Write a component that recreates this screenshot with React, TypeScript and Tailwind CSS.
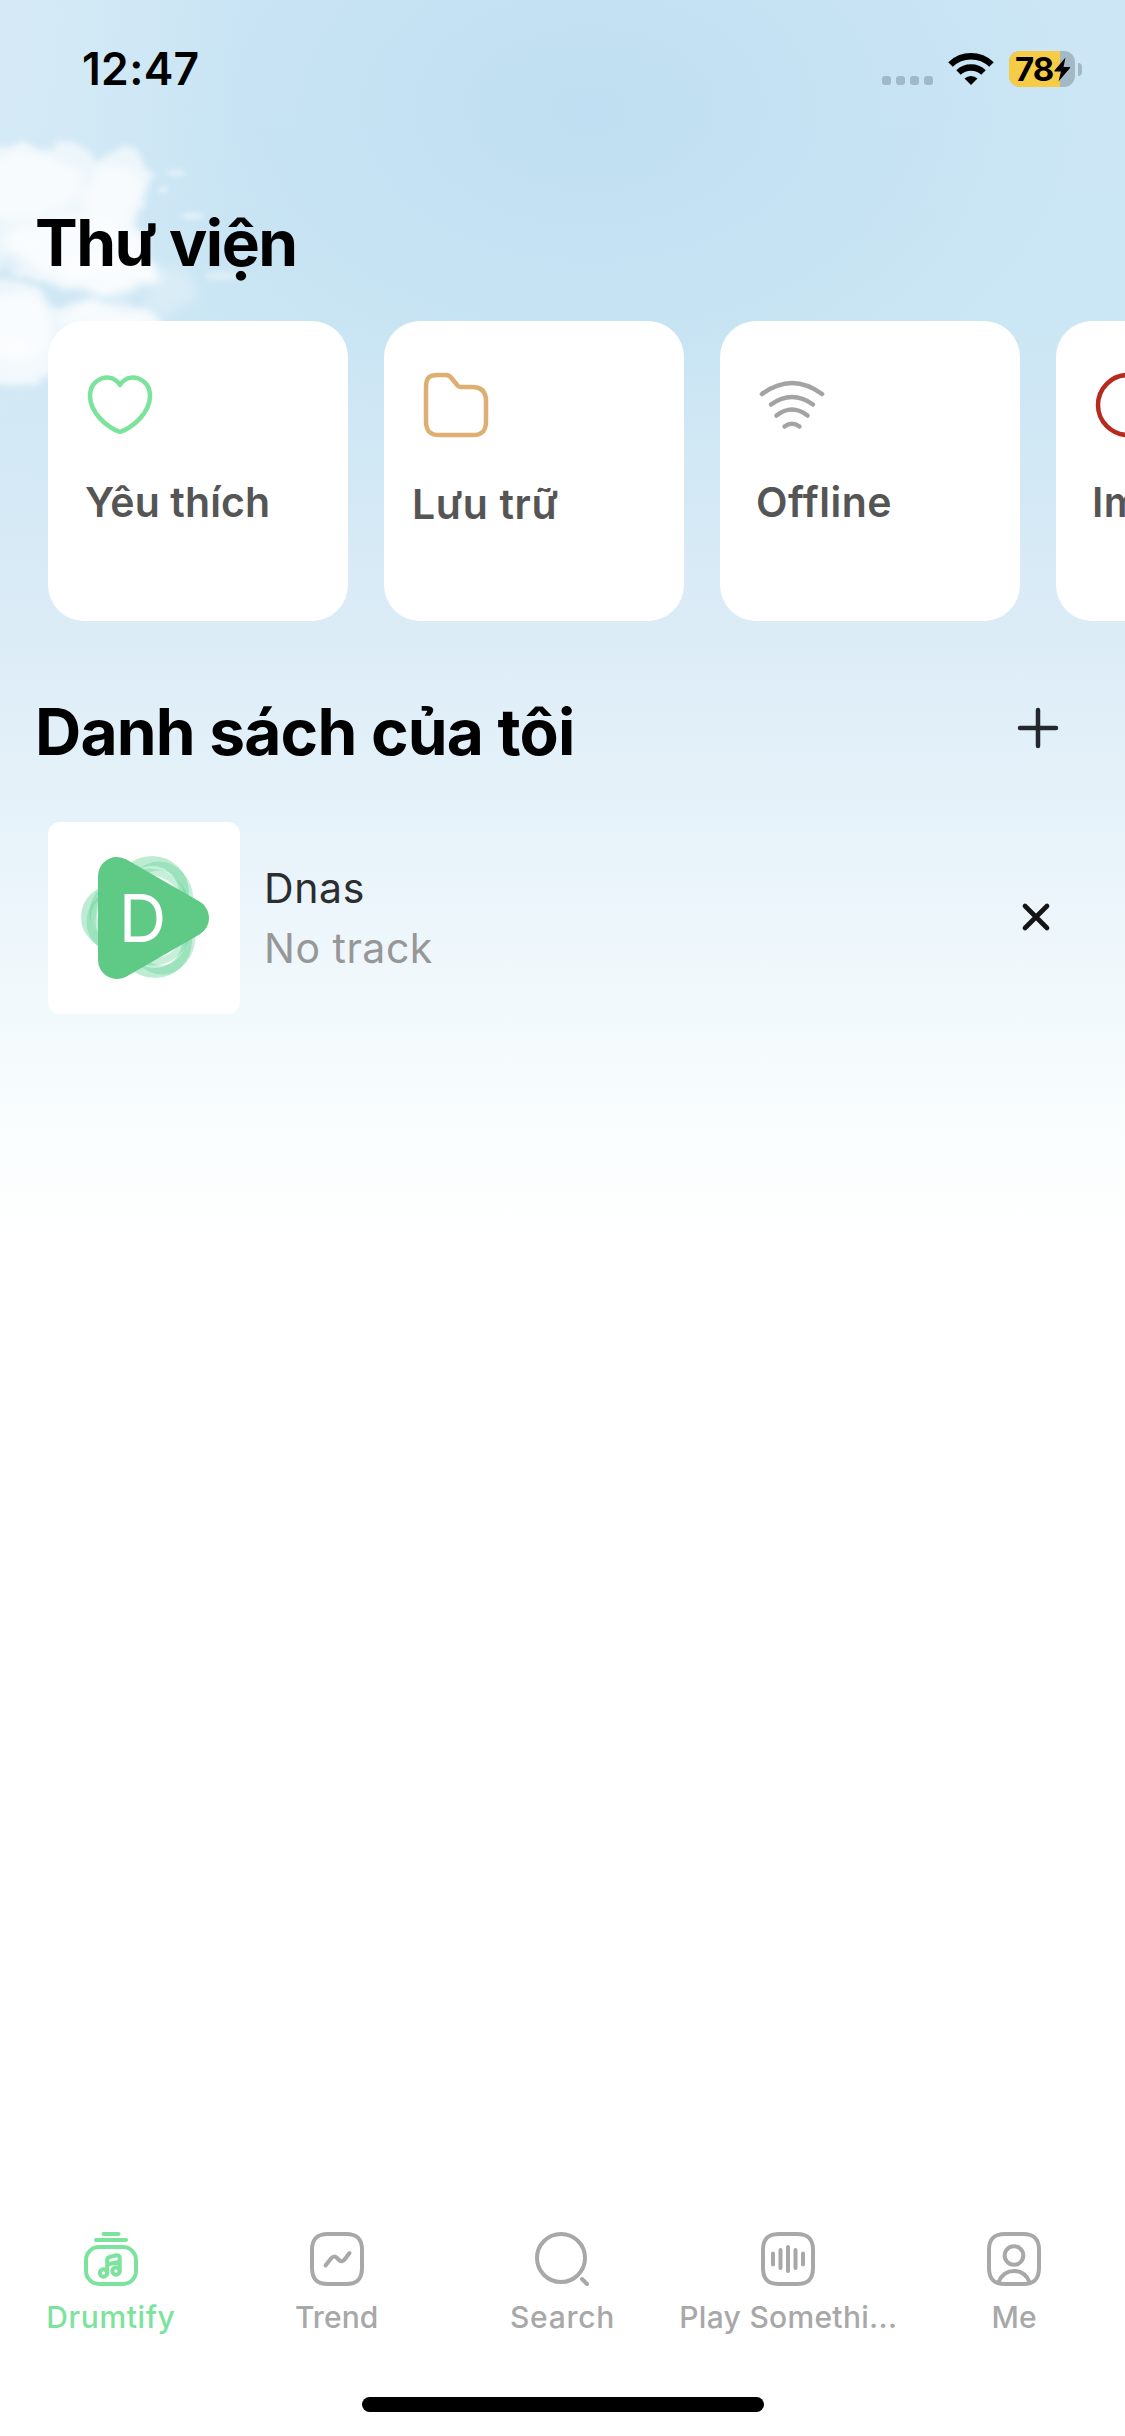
import type { ReactNode } from 'react';
import { clsx } from 'clsx';

type Shortcut = {
  id: string;
  label: string;
  color: string;
  labelClass: string;
  icon: ReactNode;
};

const shortcuts: Shortcut[] = [
  {
    id: 'favorite',
    label: 'Yêu thích',
    color: 'text-[#7be39b]',
    labelClass: 'ml-[-2px] mt-[38px] tracking-[0.1px]',
    icon: (
      <path d="M33 13C28.500 6 21 4 14.500 6.500C7 9.500 3 16 3 24C3 40 19 55 33 60C47 55 63 40 63 24C63 16 59 9.500 51.500 6.500C45 4 37.500 6 33 13Z" />
    ),
  },
  {
    id: 'archive',
    label: 'Lưu trữ',
    color: 'text-[#dfae73]',
    labelClass: 'ml-[-11px] mt-[40px] tracking-[0.6px]',
    icon: (
      <path d="M3 15C3 6 6 3 15 3H23Q26 3 28 5.500L35 14Q36 15 38 15H49C59 15 63 20 63 29V49C63 59 59 63 50 63H16C7 63 3 59 3 49Z" />
    ),
  },
  {
    id: 'offline',
    label: 'Offline',
    color: 'text-[#a3a3a3]',
    labelClass: 'ml-[-3px] mt-[38px] tracking-[0.5px]',
    icon: (
      <>
        <path d="M3 22Q33 0 63 22" />
        <path d="M12 32.500Q33 17.500 54 32.500" />
        <path d="M17.500 43.500Q33 31.500 48.500 43.500" />
        <path d="M25.500 54.500Q33 49 40.500 54.500" />
      </>
    ),
  },
  {
    id: 'import',
    label: 'Import',
    color: 'text-[#b92a1e]',
    labelClass: 'ml-[-3px] mt-[38px] tracking-[0.5px]',
    icon: <circle cx="33" cy="33" r="30" />,
  },
];

const tabs = [
  {
    id: 'drumtify',
    label: 'Drumtify',
    labelClass: 'tracking-[0.6px]',
    icon: (
      <>
        <path d="M19.500 2H34.500M12 8H42" />
        <rect x="2" y="15" width="50" height="37" rx="13" />
        <circle cx="19.500" cy="41" r="3.700" />
        <circle cx="32" cy="39" r="3.700" />
        <path d="M23.200 41V28Q23.200 25.500 25.500 25L32.500 23.300Q35.700 22.800 35.700 25.500V39M23.200 32.500L35.700 29.700" />
      </>
    ),
  },
  {
    id: 'trend',
    label: 'Trend',
    labelClass: 'tracking-[0.1px]',
    icon: (
      <>
        <path d="M18 2H36C47 2 52 7 52 18V36C52 47 47 52 36 52H18C7 52 2 47 2 36V18C2 7 7 2 18 2Z" />
        <path d="M15.500 33.500L21 26.500Q24 23 27 26L29 28Q32 31 35 27L39.500 21" />
      </>
    ),
  },
  {
    id: 'search',
    label: 'Search',
    labelClass: 'tracking-[0.7px]',
    icon: (
      <>
        <circle cx="26" cy="26" r="24" />
        <path d="M47 47L52 52" />
      </>
    ),
  },
  {
    id: 'play',
    label: 'Play Somethi...',
    labelClass: 'tracking-[0.3px]',
    icon: (
      <>
        <path d="M18 2H36C47 2 52 7 52 18V36C52 47 47 52 36 52H18C7 52 2 47 2 36V18C2 7 7 2 18 2Z" />
        <path d="M12 21.500V32.500M19.500 18V36M27 15V39M34.500 18V36M42 21.500V32.500" />
      </>
    ),
  },
  {
    id: 'me',
    label: 'Me',
    labelClass: 'tracking-[0px]',
    icon: (
      <>
        <path d="M18 2H36C47 2 52 7 52 18V36C52 47 47 52 36 52H18C7 52 2 47 2 36V18C2 7 7 2 18 2Z" />
        <circle cx="27" cy="23.500" r="9.300" />
        <path d="M11.500 50C15 42 20 39 27 39C34 39 39 42 42.500 50" />
      </>
    ),
  },
];

function Sky() {
  return (
    <div className="absolute inset-x-0 top-0 h-[1250px] bg-[linear-gradient(180deg,#cce6f5_0px,#cbe6f4_320px,#d2e8f5_470px,#dcecf7_640px,#e4f1f9_780px,#edf6fb_930px,#f5fbfd_1060px,#fbfefe_1160px,#ffffff_1250px)]">
      <div className="absolute inset-x-0 top-0 h-[620px] bg-[radial-gradient(ellipse_500px_330px_at_590px_110px,rgba(188,221,241,0.8),rgba(188,221,241,0)_100%)]" />
      <div className="absolute inset-x-0 top-0 h-[640px] bg-[radial-gradient(ellipse_240px_600px_at_0px_40px,rgba(220,237,247,0.6),rgba(220,237,247,0)_100%)]" />
      <svg className="absolute left-0 top-[110px]" width="300" height="330" viewBox="0 110 300 330">
        <defs>
          <filter id="puff" x="-20%" y="-20%" width="140%" height="140%">
            <feTurbulence type="fractalNoise" baseFrequency="0.05" numOctaves="3" seed="8" result="noise" />
            <feDisplacementMap in="SourceGraphic" in2="noise" scale="14" xChannelSelector="R" yChannelSelector="G" />
            <feGaussianBlur stdDeviation="3" />
          </filter>
          <filter id="soft" x="-40%" y="-60%" width="180%" height="220%">
            <feTurbulence type="fractalNoise" baseFrequency="0.03" numOctaves="4" seed="3" result="noise" />
            <feDisplacementMap in="SourceGraphic" in2="noise" scale="26" xChannelSelector="R" yChannelSelector="G" />
            <feGaussianBlur stdDeviation="6" />
          </filter>
          <filter id="wisp" x="-40%" y="-150%" width="180%" height="400%">
            <feGaussianBlur stdDeviation="2.5" />
          </filter>
        </defs>
        <g fill="#fff" filter="url(#puff)" opacity="0.6">
          <path d="M-20 144L10 148L22 142L38 150L52 141L74 140L90 154L98 164L108 158L122 146L138 146L144 166L154 176L142 190L142 206L132 222L144 240L150 262L160 282L100 292L-20 270Z" />
          <path d="M-20 276L20 282L44 296L60 308L90 300L130 304L160 318L170 340L60 344L50 375L20 386L-20 384Z" />
        </g>
        <g fill="#fff" filter="url(#soft)">
          <ellipse cx="30" cy="185" rx="50" ry="34" opacity="0.6" />
          <ellipse cx="112" cy="195" rx="28" ry="34" opacity="0.6" />
          <ellipse cx="75" cy="246" rx="72" ry="26" opacity="0.7" />
          <ellipse cx="110" cy="278" rx="54" ry="18" opacity="0.65" />
          <ellipse cx="15" cy="326" rx="40" ry="34" opacity="0.7" />
          <ellipse cx="20" cy="366" rx="36" ry="20" opacity="0.35" />
          <ellipse cx="168" cy="290" rx="30" ry="22" opacity="0.25" />
          <ellipse cx="110" cy="318" rx="50" ry="13" opacity="0.65" />
        </g>
        <g fill="#fff" filter="url(#wisp)">
          <ellipse cx="176" cy="173" rx="10" ry="3" opacity="0.45" />
          <ellipse cx="163" cy="190" rx="5" ry="4" opacity="0.35" />
          <ellipse cx="192" cy="216" rx="12" ry="3" opacity="0.5" />
          <ellipse cx="222" cy="276" rx="18" ry="5" opacity="0.35" />
        </g>
        <g fill="#c8e3f3" filter="url(#soft)">
          <ellipse cx="4" cy="270" rx="14" ry="7" opacity="0.5" />
          <ellipse cx="62" cy="298" rx="16" ry="6" opacity="0.7" />
          <ellipse cx="132" cy="298" rx="18" ry="5" opacity="0.7" />
        </g>
      </svg>
    </div>
  );
}

function StatusBar() {
  return (
    <header className="flex h-[132px] items-start justify-between pl-[82px] pr-[43px]">
      <span className="mt-[41px] text-[44.500px] font-semibold leading-[56px] tracking-[0.3px] text-black">12:47</span>
      <div className="mt-[51px] flex h-9 items-start">
        <div className="mt-[25px] flex gap-[5px]">
          {[0, 1, 2, 3].map((dot) => (
            <span key={dot} className="h-[9px] w-[9px] rounded-[3px] bg-[#a0b8c7]" />
          ))}
        </div>
        <svg className="ml-[15px] mt-px" width="46" height="34" viewBox="0 0 46 34">
          <g fill="none" stroke="#000" strokeWidth="6.500">
            <path d="M2.500 12.500A29.500 29.500 0 0 1 43.500 12.500" />
            <path d="M10.500 20.500A18.300 18.300 0 0 1 35.500 20.500" />
          </g>
          <path d="M16.500 26.500A9.500 9.500 0 0 1 29.500 26.500L23 33Z" />
        </svg>
        <div className="relative ml-[15px] flex h-9 w-[66px] items-center rounded-[11px] bg-[#a3b9c6]">
          <div className="absolute inset-y-0 left-0 w-[51px] rounded-l-[11px] bg-[#f6cb45]" />
          <span className="relative ml-[6px] text-[33px] font-bold leading-9 tracking-[-1px] text-black">78</span>
          <svg className="absolute left-[45px] top-[6px]" width="17" height="25" viewBox="0 0 17 25">
            <path d="M11.500 0.500L0.500 13.500Q0 14.500 1 14.500H7L4.500 24.500L16 11Q16.500 10 15.500 10H9.500Z" />
          </svg>
        </div>
        <span className="ml-[3px] mt-3 h-[13px] w-1 rounded-r-full bg-[#a3b9c6]" />
      </div>
    </header>
  );
}

function ShortcutCard({ item }: { item: Shortcut }) {
  return (
    <button className="flex h-[300px] w-[300px] shrink-0 flex-col items-start rounded-[36px] bg-white pl-[39px] pt-[51px]">
      <svg
        className={clsx('shrink-0', item.color)}
        width="66"
        height="66"
        viewBox="0 0 66 66"
        fill="none"
        stroke="currentColor"
        strokeWidth="4.500"
        strokeLinecap="round"
        strokeLinejoin="round"
      >
        {item.icon}
      </svg>
      <span className={clsx('whitespace-nowrap text-[41px] font-semibold leading-[52px] text-[#555555]', item.labelClass)}>
        {item.label}
      </span>
    </button>
  );
}

function Cover() {
  return (
    <div className="relative flex h-48 w-48 items-center justify-center rounded-xl bg-white">
      <svg className="absolute inset-0" width="192" height="192" viewBox="48 822 192 192" fill="none">
        <g stroke="#5fd294" strokeWidth="10" opacity="0.4">
          <ellipse cx="152" cy="893" rx="32" ry="32" />
          <ellipse cx="155" cy="941" rx="32" ry="32" />
          <ellipse cx="116" cy="917" rx="30" ry="28" />
        </g>
        <g stroke="#5fd294" strokeWidth="9" opacity="0.35">
          <ellipse cx="159" cy="901" rx="30" ry="35" />
          <ellipse cx="162" cy="936" rx="29" ry="34" />
          <ellipse cx="124" cy="922" rx="33" ry="30" />
        </g>
        <g stroke="#5fd294" strokeWidth="7" opacity="0.35">
          <ellipse cx="149" cy="904" rx="36" ry="32" />
          <ellipse cx="152" cy="929" rx="35" ry="33" />
          <ellipse cx="126" cy="912" rx="33" ry="30" />
        </g>
        <path d="M117 876L190 918L117 960Z" fill="#5fc986" stroke="#5fc986" strokeWidth="38" strokeLinejoin="round" />
      </svg>
      <span className="relative mr-[3px] text-[66px] leading-none text-white">D</span>
    </div>
  );
}

function Playlists() {
  return (
    <section>
      <div className="mt-[72px] flex h-[80px] items-center justify-between pl-[35px] pr-[65px]">
        <h2 className="mb-[3px] text-[64px] font-bold leading-[77px] tracking-[-0.8px] text-black">Danh sách của tôi</h2>
        <svg className="mb-[10px]" width="44" height="44" viewBox="0 0 44 44" stroke="#23282f" strokeWidth="4.500" strokeLinecap="round">
          <path d="M22 4V40M4 22H40" />
        </svg>
      </div>
      <div className="mt-[49px] flex items-center pl-12 pr-[73px]">
        <Cover />
        <div className="ml-6 flex flex-1 flex-col text-[41px] leading-[60px]">
          <span className="tracking-[0.6px] text-[#2c2d31]">Dnas</span>
          <span className="tracking-[0.5px] text-[#979797]">No track</span>
        </div>
        <svg width="32" height="32" viewBox="0 0 32 32" stroke="#151515" strokeWidth="4.700" strokeLinecap="round">
          <path d="M5 4L27 26M27 4L5 26" />
        </svg>
      </div>
    </section>
  );
}

function TabBar() {
  return (
    <nav className="mx-[-2px] mt-auto grid h-[236px] grid-cols-5">
      {tabs.map((tab, index) => (
        <button
          key={tab.id}
          className={clsx('flex flex-col items-center pt-8', index === 0 ? 'text-[#7be39b]' : 'text-[#a8a8a8]')}
          aria-label={tab.label}
        >
          <svg
            width="54"
            height="54"
            viewBox="0 0 54 54"
            fill="none"
            stroke="currentColor"
            strokeWidth="4"
            strokeLinecap="round"
            strokeLinejoin="round"
          >
            {tab.icon}
          </svg>
          <span className={clsx('mt-[11px] whitespace-nowrap text-[30px] font-medium leading-[40px]', tab.labelClass)}>
            {tab.label}
          </span>
        </button>
      ))}
    </nav>
  );
}

export default function App() {
  return (
    <div className="relative h-[2436px] w-[1125px] overflow-hidden bg-white font-[Inter,sans-serif]">
      <Sky />
      <div className="relative flex h-full flex-col">
        <StatusBar />
        <h1 className="mt-[71px] pl-[35px] text-[64px] font-bold leading-[80px] tracking-[-1.5px] text-black">Thư viện</h1>
        <div className="mt-[38px] flex gap-9 overflow-hidden pl-12">
          {shortcuts.map((item) => (
            <ShortcutCard key={item.id} item={item} />
          ))}
        </div>
        <Playlists />
        <TabBar />
        <div className="absolute bottom-6 left-[362px] h-[15px] w-[402px] rounded-full bg-black" />
      </div>
    </div>
  );
}
